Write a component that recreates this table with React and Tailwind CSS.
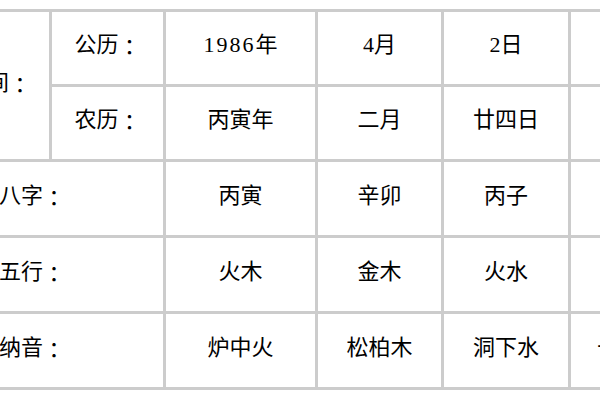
import React from 'react';

const Colon = () => (
  <span className="font-['Noto_Sans_CJK_JP',sans-serif]">：</span>
);

const Cell = ({ children, className = '' }) => (
  <div
    className={`bg-white flex items-center pb-[6px] text-[22px] leading-none text-black whitespace-nowrap ${className}`}
  >
    {children}
  </div>
);

const rows = [
  { label: '八字', values: ['丙寅', '辛卯', '丙子', ''] },
  { label: '五行', values: ['火木', '金木', '火水', ''] },
  { label: '纳音', values: ['炉中火', '松柏木', '洞下水', '长流水'] },
];

const App = () => {
  return (
    <div className="w-[600px] h-[400px] overflow-hidden bg-white pt-[9px] font-['Liberation_Serif','Noto_Sans_CJK_SC',serif]">
      <div className="ml-[-63px] w-fit grid grid-cols-[109px_111px_149px_123px_124px_118px] grid-rows-[72px_72px_73px_73px_73px] gap-[3px] p-[3px] bg-[#cccccc]">
        {/* 出生时间 */}
        <Cell className="row-span-2 justify-end pr-[18px]">
          时间<Colon />
        </Cell>
        <Cell className="justify-center">
          公历<Colon />
        </Cell>
        <Cell className="justify-center">
          <span className="tracking-[2px]">1986</span>年
        </Cell>
        <Cell className="justify-center">4月</Cell>
        <Cell className="justify-center">2日</Cell>
        <Cell className="justify-center"></Cell>

        <Cell className="justify-center">
          农历<Colon />
        </Cell>
        <Cell className="justify-center">丙寅年</Cell>
        <Cell className="justify-center">二月</Cell>
        <Cell className="justify-center">廿四日</Cell>
        <Cell className="justify-center"></Cell>

        {rows.map((row) => (
          <React.Fragment key={row.label}>
            <Cell className="col-span-2 justify-end pr-[98px]">
              {row.label}
              <Colon />
            </Cell>
            {row.values.map((v, i) => (
              <Cell key={i} className="justify-center">
                {v}
              </Cell>
            ))}
          </React.Fragment>
        ))}
      </div>
    </div>
  );
};

export default App;
